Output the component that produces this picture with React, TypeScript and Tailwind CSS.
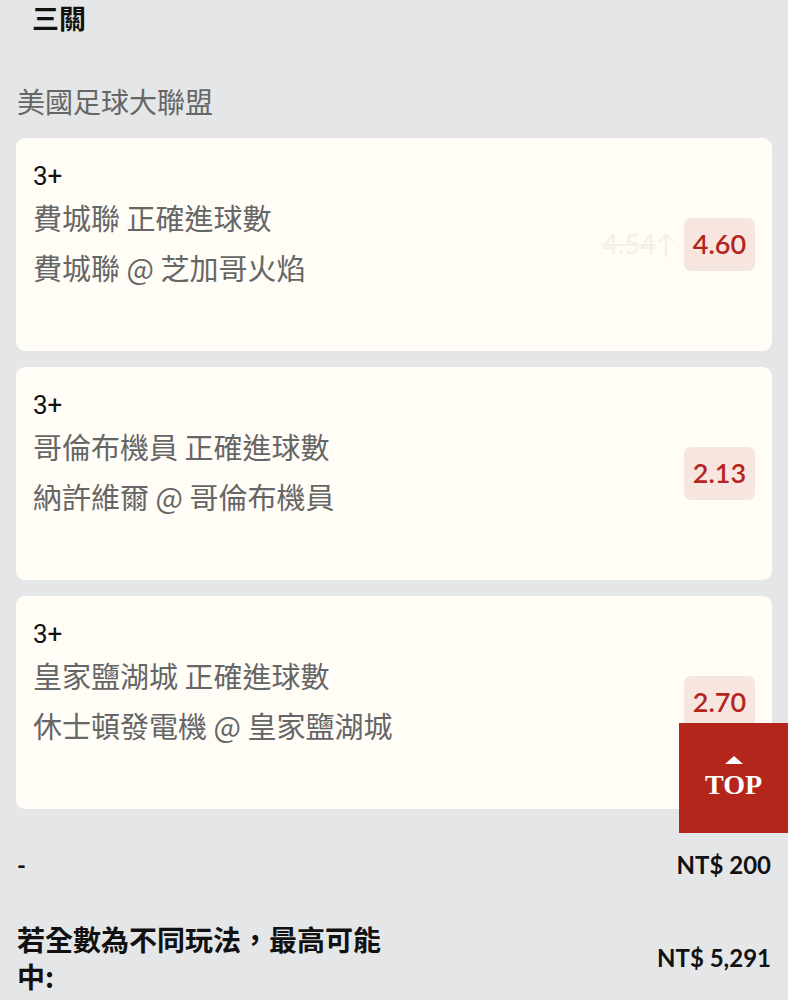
const cjk = "font-['Noto_Sans_CJK_TC','Noto_Sans',sans-serif]";

const bets = [
  { pick: '3+', market: '費城聯 正確進球數', match: '費城聯 @ 芝加哥火焰', odds: '4.60', prev: '4.54' },
  { pick: '3+', market: '哥倫布機員 正確進球數', match: '納許維爾 @ 哥倫布機員', odds: '2.13' },
  { pick: '3+', market: '皇家鹽湖城 正確進球數', match: '休士頓發電機 @ 皇家鹽湖城', odds: '2.70' },
];

function BetCard({ bet }: { bet: (typeof bets)[number] }) {
  return (
    <div className="h-[213px] rounded-[9px] bg-[#fffdf6] pl-[17px] pr-[17px] flex items-center justify-between">
      <div className="self-start pt-[22px]">
        <div className="text-[26px] leading-[32px] text-[#111] font-['Roboto',sans-serif]">{bet.pick}</div>
        <div className={`text-[29px] leading-[50px] text-[#666] ${cjk}`}>{bet.market}</div>
        <div className={`text-[29px] leading-[50px] text-[#666] ${cjk}`}>{bet.match}</div>
      </div>
      <div className="flex items-center gap-[8px]">
        {bet.prev && (
          <span className="text-[27px] text-[#f3f0e8] font-['Lato',sans-serif]">
            <span className="line-through">{bet.prev}</span>↑
          </span>
        )}
        <div className="h-[53px] w-[71px] rounded-[7px] bg-[#f7e6df] flex items-center justify-center">
          <span className="text-[27px] font-semibold text-[#b3261e] font-['Lato',sans-serif]">{bet.odds}</span>
        </div>
      </div>
    </div>
  );
}

export default function App() {
  return (
    <div className="min-h-[1000px] bg-[#e5e6e8] overflow-hidden">
      <div className={`pl-[32px] pt-[1px] text-[27px] leading-[34px] font-bold text-[#111] ${cjk}`}>三關</div>

      <div className="px-[16px]">
        <div className={`mt-[46px] pl-[1px] text-[28px] leading-[40px] text-[#666] ${cjk}`}>美國足球大聯盟</div>
        <div className="mt-[17px] flex flex-col gap-[16px]">
          {bets.map((b, i) => (
            <BetCard key={i} bet={b} />
          ))}
        </div>
      </div>

      <div className="px-[17px]">
        <div className="mt-[38px] h-[36px] flex items-center justify-between">
          <span className="text-[24px] font-bold text-[#111] font-['Lato',sans-serif]">-</span>
          <span className="text-[24px] font-bold text-[#111] font-['Lato',sans-serif]">NT$ 200</span>
        </div>
        <div className="mt-[38px] flex items-center justify-between">
          <div className={`w-[380px] text-[28px] leading-[37px] font-bold text-[#111] ${cjk}`}>
            若全數為不同玩法，最高可能中:
          </div>
          <span className="text-[24px] font-bold text-[#111] font-['Lato',sans-serif]">NT$ 5,291</span>
        </div>
      </div>

      <button className="fixed right-0 top-[723px] w-[109px] h-[110px] bg-[#b4251b] flex flex-col items-center justify-center">
        <span className="w-0 h-0 border-l-[9px] border-r-[9px] border-b-[8px] border-l-transparent border-r-transparent border-b-white" />
        <span className="mt-[6px] text-[28px] leading-[30px] font-bold text-white font-['Liberation_Serif',serif]">TOP</span>
      </button>
    </div>
  );
}
